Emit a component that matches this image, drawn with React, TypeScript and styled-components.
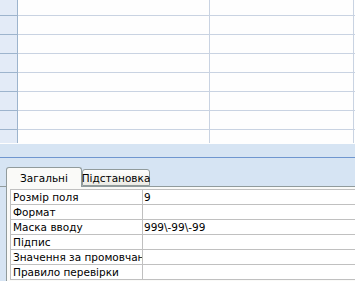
import * as React from 'react';
import styled, { createGlobalStyle } from 'styled-components';

const GlobalStyle = createGlobalStyle`
    html, body {
        margin: 0;
        padding: 0;
        width: 355px;
        height: 281px;
        overflow: hidden;
        background: #d6e4f3;
    }
    body {
        font-family: "DejaVu Sans", "Liberation Sans", sans-serif;
        font-size: 10.5px;
        color: #000;
    }
`;

const Screen = styled.div`
    width: 355px;
    height: 281px;
    display: flex;
    flex-direction: column;
    overflow: hidden;
`;

// datasheet (upper half)
const Sheet = styled.div`
    height: 144px;
    background: #fefefe;
    display: flex;
    flex-direction: column;
    flex-shrink: 0;
`;
const SheetRow = styled.div<{ $h: number }>`
    display: grid;
    grid-template-columns: 18px 192px 144px 1px;
    height: ${p => p.$h}px;
    box-sizing: border-box;
`;
const Selector = styled.div<{ $last?: boolean }>`
    background: #e3ebf7;
    border-right: 1px solid #9db4cd;
    border-bottom: ${p => (p.$last ? 'none' : '1px solid #9db4cd')};
`;
const Cell = styled.div<{ $last?: boolean; $noRight?: boolean }>`
    border-right: ${p => (p.$noRight ? 'none' : '1px solid #c9d3e2')};
    border-bottom: ${p => (p.$last ? 'none' : '1px solid #c9d3e2')};
`;

// design pane (lower half)
const Pane = styled.div`
    flex: 1;
    display: flex;
    flex-direction: column;
    background: #d6e4f3;
`;
const Splitter = styled.div`
    margin-top: 13px;
    height: 1px;
    background: #6f96cf;
`;
const TabStrip = styled.div`
    display: flex;
    align-items: flex-end;
    margin-top: 10px;
    padding-left: 6px;
    height: 19px;
    box-sizing: border-box;
    border-bottom: 1px solid #919b9c;
`;
const Tab = styled.div<{ $active?: boolean }>`
    box-sizing: border-box;
    height: ${p => (p.$active ? 20 : 17)}px;
    margin-bottom: ${p => (p.$active ? -1 : 0)}px;
    padding: ${p => (p.$active ? '0 15px' : '1px 2px 0')};
    display: flex;
    align-items: center;
    justify-content: center;
    border: 1px solid #919b9c;
    border-bottom: ${p => (p.$active ? 'none' : '1px solid #919b9c')};
    border-radius: 3px 3px 0 0;
    background: ${p => (p.$active ? '#fafaf8' : 'linear-gradient(#fefefe, #ecebe5)')};
    position: relative;
    z-index: ${p => (p.$active ? 1 : 0)};
    width: ${p => (p.$active ? 76 : 68)}px;
    white-space: nowrap;
`;
const Panel = styled.div`
    flex: 1;
    margin-left: 6px;
    border-left: 1px solid #919b9c;
    background: #fafaf8;
    padding: 2px 0 0 3px;
`;
const Props = styled.div`
    display: grid;
    grid-template-columns: 132px 1fr;
    border-left: 1px solid #c0c0c0;
    border-top: 1px solid #c0c0c0;
    background: #fff;
`;
const PropLabel = styled.div`
    height: 14px;
    line-height: 14px;
    padding-left: 2px;
    border-right: 1px solid #c0c0c0;
    border-bottom: 1px solid #c0c0c0;
    white-space: nowrap;
    overflow: hidden;
`;
const PropValue = styled.div`
    height: 14px;
    line-height: 14px;
    padding-left: 1px;
    border-bottom: 1px solid #c0c0c0;
    white-space: nowrap;
`;

const rows: Array<[string, string]> = [
    ['Розмір поля', '9'],
    ['Формат', ''],
    ['Маска вводу', '999\\-99\\-99'],
    ['Підпис', ''],
    ['Значення за промовчанням', ''],
    ['Правило перевірки', ''],
];

const heights = [16, 19, 19, 19, 19, 19, 19, 13];

export default function App() {
    return (
        <Screen>
            <GlobalStyle />
            <Sheet>
                {heights.map((h, i) => {
                    const last = i === heights.length - 1;
                    return (
                        <SheetRow key={i} $h={h}>
                            <Selector $last={last} />
                            <Cell $last={last} />
                            <Cell $last={last} />
                            <Cell $last={last} $noRight />
                        </SheetRow>
                    );
                })}
            </Sheet>
            <Pane>
                <Splitter />
                <TabStrip>
                    <Tab $active>Загальні</Tab>
                    <Tab>Підстановка</Tab>
                </TabStrip>
                <Panel>
                    <Props>
                        {rows.map(([label, value]) => (
                            <React.Fragment key={label}>
                                <PropLabel>{label}</PropLabel>
                                <PropValue>{value}</PropValue>
                            </React.Fragment>
                        ))}
                    </Props>
                </Panel>
            </Pane>
        </Screen>
    );
}
